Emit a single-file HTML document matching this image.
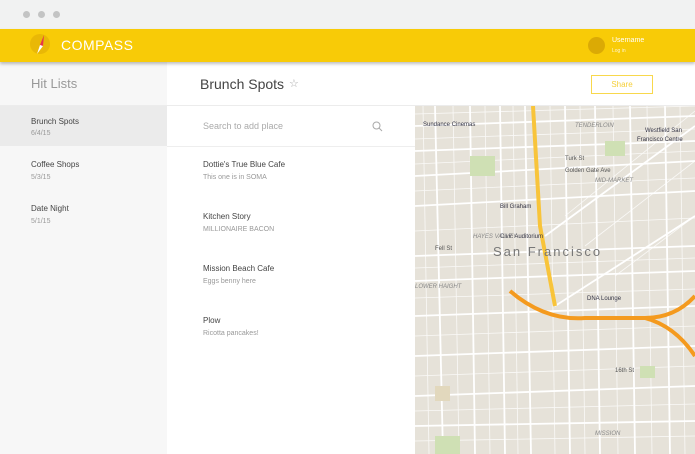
<!DOCTYPE html>
<html><head><style>
*{margin:0;padding:0;box-sizing:border-box}
body{width:695px;height:454px;overflow:hidden;background:#fff;font-family:"Liberation Sans",sans-serif;position:relative}
.top{position:absolute;left:0;top:0;width:695px;height:30px;background:#f1f2f2}
.dot{position:absolute;top:11px;width:7px;height:7px;border-radius:50%;background:#c3c4c4}
.bar{position:absolute;left:0;top:29px;width:695px;height:33px;background:#f8cb07;box-shadow:0 2px 3px rgba(0,0,0,.25);z-index:2}
.side{position:absolute;left:0;top:62px;width:167px;height:392px;background:#f7f7f7}
.sel{position:absolute;left:0;top:106px;width:167px;height:40px;background:#ebebeb}
.t{position:absolute;white-space:nowrap}
.map{position:absolute;left:415px;top:106px;width:280px;height:348px;background:#e6e2d9;overflow:hidden}
.m{position:absolute;white-space:nowrap;font-size:6px;color:#555}
</style></head><body>
<div class="top"><div class="dot" style="left:23px"></div><div class="dot" style="left:38px"></div><div class="dot" style="left:53px"></div></div>
<div class="bar">
<div style="position:absolute;left:30px;top:5px;width:20px;height:20px;border-radius:50%;background:#e9b806"></div>
<svg style="position:absolute;left:30px;top:4px" width="20" height="22"><polygon points="14,2 10,12 13,13" fill="#e8354a"/><polygon points="10,12 13,13 7,21" fill="#fff"/></svg>
<div class="t" style="left:61px;top:8px;color:#fff;font-size:14px;letter-spacing:.5px">COMPASS</div>
<div style="position:absolute;left:588px;top:8px;width:17px;height:17px;border-radius:50%;background:#dbaa05"></div>
<div class="t" style="left:612px;top:8px;color:#fff;font-size:7px">Username</div>
<div class="t" style="left:612px;top:19px;color:#fff;font-size:5px;opacity:.8">Log in</div>
</div>
<div class="side"></div>
<div class="sel"></div>
<div style="position:absolute;left:0;top:105px;width:695px;height:1px;background:#ececec"></div>
<div class="t" style="left:31px;top:76px;font-size:13px;color:#999">Hit Lists</div>
<div class="t" style="left:31px;top:117px;font-size:8px;color:#444">Brunch Spots</div>
<div class="t" style="left:31px;top:130px;font-size:7px;color:#999">6/4/15</div>
<div class="t" style="left:31px;top:160px;font-size:8px;color:#444">Coffee Shops</div>
<div class="t" style="left:31px;top:174px;font-size:7px;color:#999">5/3/15</div>
<div class="t" style="left:31px;top:204px;font-size:8px;color:#444">Date Night</div>
<div class="t" style="left:31px;top:218px;font-size:7px;color:#999">5/1/15</div>
<div class="t" style="left:200px;top:76px;font-size:14px;color:#444">Brunch Spots</div>
<div class="t" style="left:289px;top:77px;font-size:11px;color:#aaa">☆</div>
<div style="position:absolute;left:591px;top:75px;width:62px;height:19px;border:1.5px solid #f8d84c"></div>
<div class="t" style="left:591px;top:80px;width:62px;text-align:center;font-size:8px;color:#f5cf3a">Share</div>
<div class="t" style="left:203px;top:121px;font-size:9px;color:#aaa">Search to add place</div>
<svg style="position:absolute;left:372px;top:121px" width="11" height="11"><circle cx="4.5" cy="4.5" r="3.5" fill="none" stroke="#aaa" stroke-width="1"/><line x1="7" y1="7" x2="10" y2="10" stroke="#aaa"/></svg>
<div style="position:absolute;left:167px;top:146px;width:248px;height:1px;background:#eee"></div>
<div class="t" style="left:203px;top:160px;font-size:8px;color:#444">Dottie's True Blue Cafe</div>
<div class="t" style="left:203px;top:174px;font-size:7px;color:#999">This one is in SOMA</div>
<div class="t" style="left:203px;top:212px;font-size:8px;color:#444">Kitchen Story</div>
<div class="t" style="left:203px;top:226px;font-size:7px;color:#999">MILLIONAIRE BACON</div>
<div class="t" style="left:203px;top:264px;font-size:8px;color:#444">Mission Beach Cafe</div>
<div class="t" style="left:203px;top:278px;font-size:7px;color:#999">Eggs benny here</div>
<div class="t" style="left:203px;top:316px;font-size:8px;color:#444">Plow</div>
<div class="t" style="left:203px;top:330px;font-size:7px;color:#999">Ricotta pancakes!</div>
<div class="map">
<svg width="280" height="348" stroke="#fff" fill="none">
<g stroke-width="0.8" opacity=".8">
<line x1="0" y1="8" x2="280" y2="0"/><line x1="0" y1="33" x2="280" y2="23"/><line x1="0" y1="58" x2="280" y2="45"/><line x1="0" y1="85" x2="280" y2="72"/>
<line x1="0" y1="125" x2="280" y2="112"/><line x1="0" y1="162" x2="280" y2="152"/><line x1="0" y1="192" x2="280" y2="183"/><line x1="0" y1="230" x2="280" y2="220"/><line x1="0" y1="270" x2="280" y2="260"/><line x1="0" y1="305" x2="280" y2="298"/><line x1="0" y1="335" x2="280" y2="330"/>
<line x1="8" y1="0" x2="14" y2="348"/><line x1="38" y1="0" x2="44" y2="348"/><line x1="70" y1="0" x2="75" y2="348"/><line x1="98" y1="0" x2="103" y2="348"/>
<line x1="135" y1="0" x2="140" y2="348"/><line x1="165" y1="0" x2="170" y2="348"/><line x1="198" y1="0" x2="203" y2="348"/><line x1="232" y1="0" x2="237" y2="348"/><line x1="265" y1="0" x2="270" y2="348"/>
<line x1="150" y1="110" x2="280" y2="5"/><line x1="170" y1="140" x2="280" y2="55"/><line x1="200" y1="170" x2="280" y2="110"/>
</g>
<g stroke-width="1.8">
<line x1="0" y1="20" x2="280" y2="10"/><line x1="0" y1="45" x2="280" y2="35"/><line x1="0" y1="70" x2="280" y2="55"/>
<line x1="0" y1="100" x2="280" y2="85"/><line x1="0" y1="150" x2="280" y2="140"/><line x1="0" y1="175" x2="280" y2="165"/>
<line x1="0" y1="210" x2="280" y2="200"/><line x1="0" y1="250" x2="280" y2="240"/><line x1="0" y1="290" x2="280" y2="280"/><line x1="0" y1="320" x2="280" y2="315"/>
<line x1="20" y1="0" x2="28" y2="348"/><line x1="55" y1="0" x2="60" y2="348"/><line x1="85" y1="0" x2="90" y2="348"/><line x1="110" y1="0" x2="116" y2="348"/>
<line x1="150" y1="0" x2="155" y2="348"/><line x1="180" y1="0" x2="185" y2="348"/><line x1="215" y1="0" x2="220" y2="348"/><line x1="250" y1="0" x2="255" y2="348"/>
<line x1="130" y1="130" x2="280" y2="20"/><line x1="140" y1="200" x2="280" y2="110"/>
</g>
<rect x="55" y="50" width="25" height="20" fill="#cfe0b4" stroke="none"/>
<rect x="190" y="35" width="20" height="15" fill="#cfe0b4" stroke="none"/>
<rect x="20" y="330" width="25" height="18" fill="#cfe0b4" stroke="none"/>
<rect x="225" y="260" width="15" height="12" fill="#cfe0b4" stroke="none"/>
<rect x="20" y="280" width="15" height="15" fill="#e2d8bd" stroke="none"/>
<path d="M118 0 L125 120 L140 200" stroke="#f8c43a" stroke-width="4"/>
<path d="M95 185 Q130 215 170 212 L230 212 Q260 212 280 190" stroke="#f49a1e" stroke-width="4"/>
<path d="M230 212 Q260 220 280 250" stroke="#f49a1e" stroke-width="4"/>
</svg>
<div class="t" style="left:78px;top:138px;font-size:13px;color:#777;letter-spacing:2px">San Francisco</div>
<div class="m" style="left:8px;top:16px;color:#334">Sundance Cinemas</div>
<div class="m" style="left:230px;top:22px;color:#334">Westfield San</div>
<div class="m" style="left:222px;top:31px;color:#334">Francisco Centre</div>
<div class="m" style="left:85px;top:98px;color:#334">Bill Graham</div>
<div class="m" style="left:85px;top:128px;color:#334">Civic Auditorium</div>
<div class="m" style="left:172px;top:190px;color:#334">DNA Lounge</div>
<div class="m" style="left:150px;top:50px">Turk St</div>
<div class="m" style="left:150px;top:62px">Golden Gate Ave</div>
<div class="m" style="left:58px;top:128px;color:#888;font-style:italic">HAYES VALLEY</div>
<div class="m" style="left:0px;top:178px;color:#888;font-style:italic">LOWER HAIGHT</div>
<div class="m" style="left:180px;top:72px;color:#888;font-style:italic">MID-MARKET</div>
<div class="m" style="left:160px;top:17px;color:#888;font-style:italic">TENDERLOIN</div>
<div class="m" style="left:180px;top:325px;color:#888;font-style:italic">MISSION</div>
<div class="m" style="left:20px;top:140px">Fell St</div>
<div class="m" style="left:200px;top:262px">16th St</div>
</div>
</body></html>
